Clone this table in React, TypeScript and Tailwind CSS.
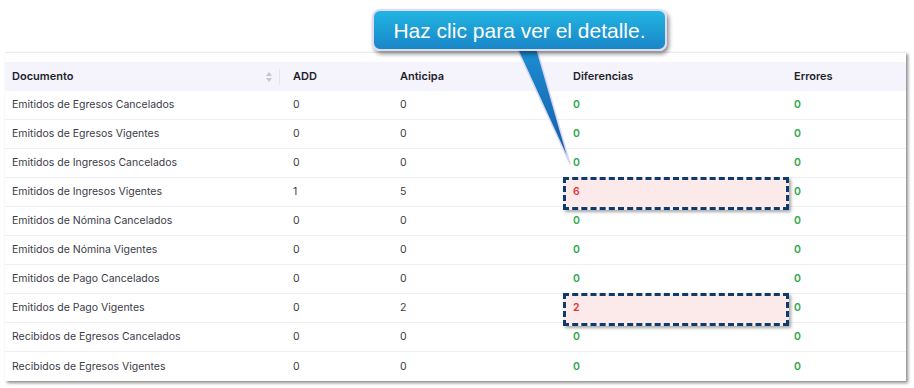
import React from 'react';

type Row = { doc: string; add: number; anticipa: number; dif: number; err: number };

const rows: Row[] = [
  { doc: 'Emitidos de Egresos Cancelados', add: 0, anticipa: 0, dif: 0, err: 0 },
  { doc: 'Emitidos de Egresos Vigentes', add: 0, anticipa: 0, dif: 0, err: 0 },
  { doc: 'Emitidos de Ingresos Cancelados', add: 0, anticipa: 0, dif: 0, err: 0 },
  { doc: 'Emitidos de Ingresos Vigentes', add: 1, anticipa: 5, dif: 6, err: 0 },
  { doc: 'Emitidos de Nómina Cancelados', add: 0, anticipa: 0, dif: 0, err: 0 },
  { doc: 'Emitidos de Nómina Vigentes', add: 0, anticipa: 0, dif: 0, err: 0 },
  { doc: 'Emitidos de Pago Cancelados', add: 0, anticipa: 0, dif: 0, err: 0 },
  { doc: 'Emitidos de Pago Vigentes', add: 0, anticipa: 2, dif: 2, err: 0 },
  { doc: 'Recibidos de Egresos Cancelados', add: 0, anticipa: 0, dif: 0, err: 0 },
  { doc: 'Recibidos de Egresos Vigentes', add: 0, anticipa: 0, dif: 0, err: 0 },
];

const SortIcon = () => (
  <svg width="8" height="12" viewBox="0 0 8 12" className="text-[#c4c4cc]">
    <path d="M4 1 L7 5 H1 Z" fill="currentColor" />
    <path d="M4 11 L7 7 H1 Z" fill="currentColor" />
  </svg>
);

const App: React.FC = () => {
  return (
    <div className="relative w-[914px] h-[388px] bg-white overflow-hidden font-['Inter',sans-serif] text-[10.5px] text-[#3b3b48]">
      <div className="ml-[5px] mt-[52px] w-[901px] bg-white border-t border-[#ececf2] pt-[9px] shadow-[2px_2px_3px_rgba(0,0,0,0.45)]">
        <div className="flex h-[29px] items-center bg-[#f5f4fd] font-semibold text-[11px] text-[#1f1f2b]">
          <div className="w-[281px] flex items-center justify-between pl-[7px] pr-[6px] h-full">
            <span>Documento</span>
            <div className="flex items-center gap-[6px] h-full">
              <SortIcon />
              <div className="w-px h-[16px] bg-[#e4e4ec]" />
            </div>
          </div>
          <div className="w-[107px] pl-[7px]">ADD</div>
          <div className="w-[173px] pl-[7px]">Anticipa</div>
          <div className="w-[221px] pl-[7px]">Diferencias</div>
          <div className="flex-1 pl-[7px]">Errores</div>
        </div>
        {rows.map((r, i) => (
          <div
            key={r.doc}
            className={`flex h-[29px] items-center ${i < rows.length - 1 ? 'border-b border-[#eeeef3]' : ''}`}
          >
            <div className="w-[281px] pl-[7px]">{r.doc}</div>
            <div className="w-[107px] pl-[7px]">{r.add}</div>
            <div className="w-[173px] pl-[7px]">{r.anticipa}</div>
            <div className="relative w-[221px] pl-[7px] h-full flex items-center">
              {r.dif > 0 && (
                <div className="absolute left-[-3px] right-[-2px] top-[-1px] bottom-[-4px] bg-[#fce9e9] border-[3px] border-dashed border-[#0d3b6e] shadow-[2px_2px_3px_rgba(0,0,0,0.35)]" />
              )}
              <span className={`relative font-semibold ${r.dif > 0 ? 'text-[#e0363c]' : 'text-[#2fa84f]'}`}>{r.dif}</span>
            </div>
            <div className="flex-1 pl-[7px] font-semibold text-[#2fa84f]">{r.err}</div>
          </div>
        ))}
      </div>

      <svg className="absolute left-0 top-0" width="914" height="388" viewBox="0 0 914 388">
        <defs>
          <linearGradient id="tail" x1="0" y1="0" x2="0" y2="1">
            <stop offset="0" stopColor="#1d8fd2" />
            <stop offset="1" stopColor="#1358a8" />
          </linearGradient>
        </defs>
        <polygon points="516,46 536,46 570,164" fill="url(#tail)" stroke="#d6d6f4" strokeWidth="1.5" strokeLinejoin="round" />
      </svg>

      <div className="absolute left-[372px] top-[9px] w-[295px] h-[42px] rounded-[8px] border-2 border-[#dcdcf6] bg-gradient-to-b from-[#22b5e2] to-[#1a86c8] shadow-[2px_3px_4px_rgba(0,0,0,0.45)] flex items-center justify-center pt-[1px] font-['Liberation_Sans',Arial,sans-serif] text-[21px] text-white">
        Haz clic para ver el detalle.
      </div>
    </div>
  );
};

export default App;
